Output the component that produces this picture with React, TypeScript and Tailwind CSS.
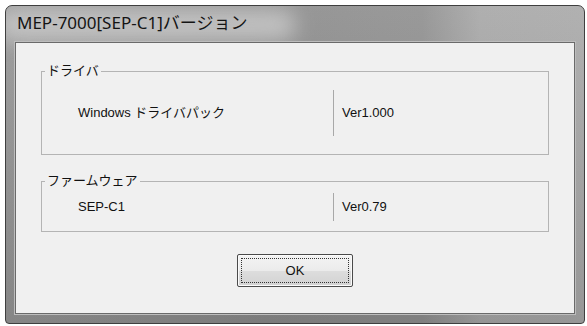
// MEP-7000 バージョン情報ダイアログ (Vista 風)

const UI_FONT = "font-['Liberation_Sans','Noto_Sans_CJK_JP',sans-serif]"

function GroupBox({
  label,
  height,
  children,
}: {
  label: string
  height: string
  children: React.ReactNode
}) {
  return (
    <div className={`relative border border-[#b4b4b4] ${height} flex items-center`}>
      <span className="absolute -top-[9px] left-[3px] bg-[#f0f0f0] px-[2px] text-[13px] leading-[16px] text-[#111]">
        {label}
      </span>
      {children}
    </div>
  )
}

function InfoRow({ name, version, sepHeight }: { name: string; version: string; sepHeight: string }) {
  return (
    <div className="flex items-center w-full">
      <div className="w-[291px] pl-[36px] text-[13px] text-[#111]">{name}</div>
      <div className={`w-px ${sepHeight} bg-[#a8a8a8]`} />
      <div className="pl-[8px] text-[13px] text-[#111]">{version}</div>
    </div>
  )
}

export default function App() {
  return (
    <div className={`w-[587px] h-[326px] bg-white pt-[5px] pl-[5px] ${UI_FONT}`}>
      <div className="relative w-[580px] h-[319px] flex flex-col rounded-t-[7px] rounded-b-[4px] border border-[#3f3f3f] bg-[linear-gradient(to_right,#959595_0%,#8a8a8a_45%,#8e8e8e_72%,#a6a6a6_82%,#a8a8a8_100%)] overflow-hidden">
        <div className="absolute inset-0 bg-[linear-gradient(to_bottom,rgba(255,255,255,0.1),rgba(0,0,0,0.1))] pointer-events-none" />
        {/* タイトル背後のグロー */}
        <div className="absolute left-[-10px] top-[3px] w-[300px] h-[32px] rounded-full bg-[#cfcfcf] blur-[10px] opacity-75 pointer-events-none" />

        <div className="relative h-[36px] flex items-center pl-[11px] pb-[2px]">
          <span className="text-[17px] text-[#141414] font-['Noto_Sans','Noto_Sans_CJK_JP',sans-serif]">
            MEP-7000[SEP-C1]バージョン
          </span>
        </div>

        <div className="relative flex-1 mx-[9px] mb-[9px] border border-[#6a6a6a] shadow-[0_0_0_1px_#bdbdbd] bg-[#f0f0f0] px-[25px] pt-[28px] flex flex-col">
          <GroupBox label="ドライバ" height="h-[84px]">
            <InfoRow name="Windows ドライバパック" version="Ver1.000" sepHeight="h-[46px]" />
          </GroupBox>

          <div className="mt-[26px]">
            <GroupBox label="ファームウェア" height="h-[51px]">
              <InfoRow name="SEP-C1" version="Ver0.79" sepHeight="h-[28px]" />
            </GroupBox>
          </div>

          <div className="mt-[22px] flex justify-center">
            <button className="w-[116px] h-[33px] rounded-[2px] border border-[#4a4a4a] bg-[linear-gradient(to_bottom,#f4f4f4_0%,#ebebeb_50%,#dddddd_52%,#d2d2d2_100%)] shadow-[inset_0_0_0_1px_#fafafa] p-[3px]">
              <div className="w-full h-full border border-dotted border-[#333] flex items-center justify-center text-[13px] text-[#111]">
                OK
              </div>
            </button>
          </div>
        </div>
      </div>
    </div>
  )
}
